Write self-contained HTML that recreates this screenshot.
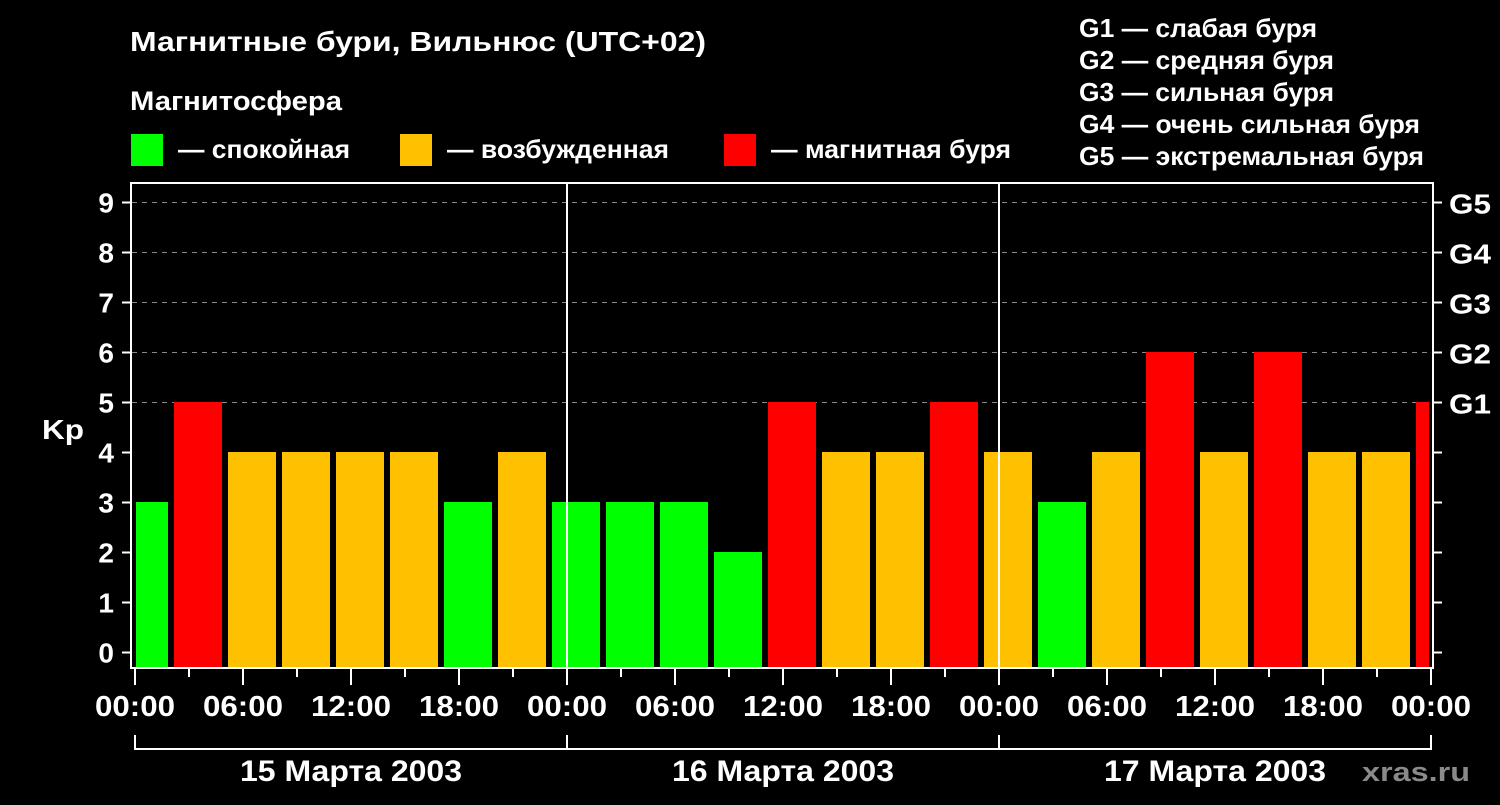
<!DOCTYPE html>
<html><head><meta charset="utf-8"><style>
body{margin:0;background:#000;width:1500px;height:800px;overflow:hidden}
svg text{font-family:"Liberation Sans",Arial,sans-serif;font-weight:bold;fill:#fff}
</style></head><body>
<svg width="1500" height="800" xmlns="http://www.w3.org/2000/svg">
<rect width="1500" height="800" fill="#000"/>
<text x="130" y="51" font-size="28" textLength="576" lengthAdjust="spacingAndGlyphs">Магнитные бури, Вильнюс (UTC+02)</text>
<text x="130" y="110" font-size="27" textLength="212" lengthAdjust="spacingAndGlyphs">Магнитосфера</text>
<rect x="131" y="134" width="32" height="32" fill="#00ff00"/>
<text x="178" y="158" font-size="26" textLength="172" lengthAdjust="spacingAndGlyphs">— спокойная</text>
<rect x="400" y="134" width="32" height="32" fill="#ffc000"/>
<text x="447" y="158" font-size="26" textLength="222" lengthAdjust="spacingAndGlyphs">— возбужденная</text>
<rect x="724" y="134" width="32" height="32" fill="#ff0000"/>
<text x="771" y="158" font-size="26" textLength="240" lengthAdjust="spacingAndGlyphs">— магнитная буря</text>
<g font-size="26">
<text x="1079" y="37" textLength="238" lengthAdjust="spacingAndGlyphs">G1 — слабая буря</text>
<text x="1079" y="69" textLength="255" lengthAdjust="spacingAndGlyphs">G2 — средняя буря</text>
<text x="1079" y="101" textLength="255" lengthAdjust="spacingAndGlyphs">G3 — сильная буря</text>
<text x="1079" y="133" textLength="341" lengthAdjust="spacingAndGlyphs">G4 — очень сильная буря</text>
<text x="1079" y="165" textLength="345" lengthAdjust="spacingAndGlyphs">G5 — экстремальная буря</text>
</g>
<g stroke="#888" stroke-width="1" stroke-dasharray="5,5">
<line x1="132" y1="202.5" x2="1432" y2="202.5"/>
<line x1="132" y1="252.5" x2="1432" y2="252.5"/>
<line x1="132" y1="302.5" x2="1432" y2="302.5"/>
<line x1="132" y1="352.5" x2="1432" y2="352.5"/>
<line x1="132" y1="402.5" x2="1432" y2="402.5"/>
</g>
<g id="bars"></g>
<g stroke="#fff" stroke-width="2" fill="none">
<rect x="131" y="183" width="1302" height="485"/>
<line x1="567" y1="183" x2="567" y2="668"/>
<line x1="999" y1="183" x2="999" y2="668"/>
<path d="M135 735V749H1431V735M567 735V749M999 735V749"/>
</g>
<g id="ticks" stroke="#fff" stroke-width="2"></g>
<g id="labels"></g>
<text x="42" y="439" font-size="28" textLength="42" lengthAdjust="spacingAndGlyphs">Kp</text>
<g font-size="30">
<text x="240" y="781" textLength="222" lengthAdjust="spacingAndGlyphs">15 Марта 2003</text>
<text x="672" y="781" textLength="222" lengthAdjust="spacingAndGlyphs">16 Марта 2003</text>
<text x="1104" y="781" textLength="222" lengthAdjust="spacingAndGlyphs">17 Марта 2003</text>
</g>
<text x="1362" y="781" font-size="27" style="fill:#8a8a8a" textLength="108" lengthAdjust="spacingAndGlyphs">xras.ru</text>
</svg>
<script>
var v=[3,5,4,4,4,4,3,4,3,3,3,2,5,4,4,5,4,3,4,6,4,6,4,4,5];
var ns="http://www.w3.org/2000/svg",b=document.getElementById('bars'),t=document.getElementById('ticks'),l=document.getElementById('labels');
function el(p,n,a,txt){var e=document.createElementNS(ns,n);for(var k in a)e.setAttribute(k,a[k]);if(txt!=null)e.textContent=txt;p.appendChild(e);}
v.forEach(function(k,i){var x=120+54*i,w=48;if(x<136){w-=136-x;x=136;}if(x+w>1429)w=1429-x;
var c=k>=5?'#ff0000':(k==4?'#ffc000':'#00ff00');el(b,'rect',{x:x,y:652-50*k,width:w,height:668-(652-50*k),fill:c});});
for(var k=0;k<=9;k++){var y=652.5-50*k;el(t,'line',{x1:122,y1:y,x2:131,y2:y});el(t,'line',{x1:1433,y1:y,x2:1442,y2:y});
el(l,'text',{x:114,y:y+10,'font-size':28,'text-anchor':'end'},String(k));}
['G1','G2','G3','G4','G5'].forEach(function(g,i){el(l,'text',{x:1449,y:402.5-50*i+11,'font-size':28,textLength:42,lengthAdjust:'spacingAndGlyphs'},g);});
for(var i=0;i<=24;i++){var x=135+54*i;el(t,'line',{x1:x,y1:669,x2:x,y2:i%2?677:685});}
var hh=['00:00','06:00','12:00','18:00'];
for(var i=0;i<=12;i++){el(l,'text',{x:95+108*i,y:716,'font-size':29,textLength:80,lengthAdjust:'spacingAndGlyphs'},hh[i%4]);}
</script>
</body></html>
